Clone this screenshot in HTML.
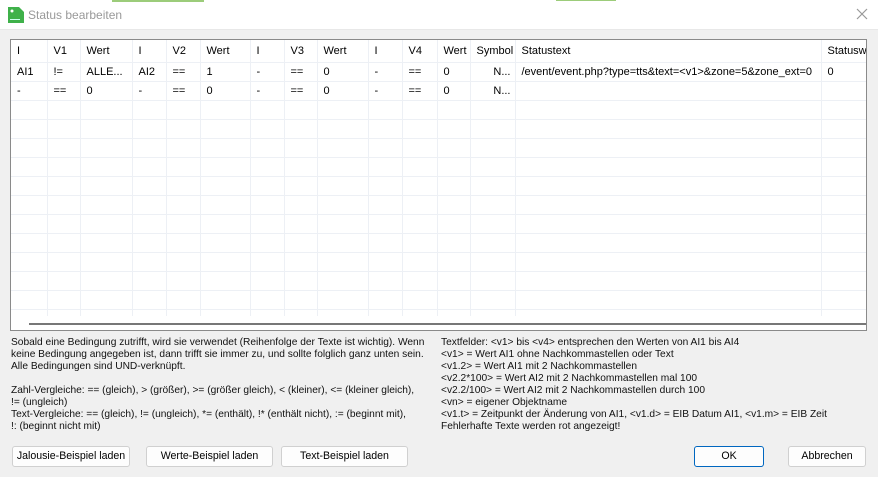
<!DOCTYPE html>
<html><head><meta charset="utf-8"><style>
*{margin:0;padding:0;box-sizing:border-box}
body{width:878px;height:477px;background:#f0f0f0;font-family:"Liberation Sans",sans-serif;font-size:11px;color:#000;position:relative;overflow:hidden}
.title{position:absolute;left:0;top:0;width:878px;height:30px;background:#fff;border-bottom:1px solid #e8e8e8}
.title span{position:absolute;left:28px;top:8px;font-size:12px;color:#999}
.grn{position:absolute;left:112px;top:0;width:92px;height:2px;background:#9ccc7a}
.grn2{position:absolute;left:556px;top:0;width:60px;height:1px;background:#9ccc7a}
.tbox{position:absolute;left:10px;top:39px;width:857px;height:292px;background:#fff;border:1px solid #8a8a8a;overflow:hidden}
table{border-collapse:collapse;table-layout:fixed;position:absolute;left:0;top:0;width:870px}
td{border-right:1px solid #edf0f5;border-bottom:1px solid #edf0f5;height:19px;padding:0 0 0 6px;white-space:nowrap;overflow:hidden;vertical-align:middle}
tr.h td{height:22px}
.r{text-align:right;padding-right:4px}
.sb{position:absolute;left:18px;top:283px;width:840px;height:2px;background:#777}
.sbbg{position:absolute;left:0;top:276px;width:857px;height:16px;background:#fff}
.txt{position:absolute;top:337px;line-height:12px;font-size:10.2px;color:#111;white-space:nowrap}
.btn{position:absolute;top:446px;height:21px;background:#fdfdfd;border:1px solid #d0d0d0;border-radius:3px;text-align:center;line-height:19px;font-size:10.6px}
</style></head><body>
<div class="title"><svg style="position:absolute;left:8px;top:7px" width="16" height="16"><path d="M0 0H11L16 5V16H0Z" fill="#3fb14a"/><circle cx="4" cy="4" r="1.5" fill="#fff"/><rect x="2" y="12" width="10" height="1" fill="#cfe"/></svg><span>Status bearbeiten</span>
<svg style="position:absolute;left:856px;top:8px" width="12" height="12"><path d="M1 1L11 11M11 1L1 11" stroke="#999" stroke-width="1.2"/></svg></div>
<div class="grn"></div><div class="grn2"></div>
<div class="tbox">
<table>
<colgroup><col style="width:36px"><col style="width:33px"><col style="width:52px"><col style="width:34px"><col style="width:34px"><col style="width:50px"><col style="width:34px"><col style="width:33px"><col style="width:51px"><col style="width:34px"><col style="width:35px"><col style="width:33px"><col style="width:45px"><col style="width:306px"><col style="width:60px"></colgroup>
<tr class="h"><td>I</td><td>V1</td><td>Wert</td><td>I</td><td>V2</td><td>Wert</td><td>I</td><td>V3</td><td>Wert</td><td>I</td><td>V4</td><td>Wert</td><td>Symbol</td><td>Statustext</td><td>Statuswert</td></tr>
<tr><td>AI1</td><td>!=</td><td>ALLE...</td><td>AI2</td><td>==</td><td>1</td><td>-</td><td>==</td><td>0</td><td>-</td><td>==</td><td>0</td><td class="r">N...</td><td>/event/event.php?type=tts&amp;text=&lt;v1&gt;&amp;zone=5&amp;zone_ext=0</td><td>0</td></tr>
<tr><td>-</td><td>==</td><td>0</td><td>-</td><td>==</td><td>0</td><td>-</td><td>==</td><td>0</td><td>-</td><td>==</td><td>0</td><td class="r">N...</td><td></td><td></td></tr>
<tr><td></td><td></td><td></td><td></td><td></td><td></td><td></td><td></td><td></td><td></td><td></td><td></td><td></td><td></td><td></td></tr>
<tr><td></td><td></td><td></td><td></td><td></td><td></td><td></td><td></td><td></td><td></td><td></td><td></td><td></td><td></td><td></td></tr>
<tr><td></td><td></td><td></td><td></td><td></td><td></td><td></td><td></td><td></td><td></td><td></td><td></td><td></td><td></td><td></td></tr>
<tr><td></td><td></td><td></td><td></td><td></td><td></td><td></td><td></td><td></td><td></td><td></td><td></td><td></td><td></td><td></td></tr>
<tr><td></td><td></td><td></td><td></td><td></td><td></td><td></td><td></td><td></td><td></td><td></td><td></td><td></td><td></td><td></td></tr>
<tr><td></td><td></td><td></td><td></td><td></td><td></td><td></td><td></td><td></td><td></td><td></td><td></td><td></td><td></td><td></td></tr>
<tr><td></td><td></td><td></td><td></td><td></td><td></td><td></td><td></td><td></td><td></td><td></td><td></td><td></td><td></td><td></td></tr>
<tr><td></td><td></td><td></td><td></td><td></td><td></td><td></td><td></td><td></td><td></td><td></td><td></td><td></td><td></td><td></td></tr>
<tr><td></td><td></td><td></td><td></td><td></td><td></td><td></td><td></td><td></td><td></td><td></td><td></td><td></td><td></td><td></td></tr>
<tr><td></td><td></td><td></td><td></td><td></td><td></td><td></td><td></td><td></td><td></td><td></td><td></td><td></td><td></td><td></td></tr>
<tr><td></td><td></td><td></td><td></td><td></td><td></td><td></td><td></td><td></td><td></td><td></td><td></td><td></td><td></td><td></td></tr>
<tr><td></td><td></td><td></td><td></td><td></td><td></td><td></td><td></td><td></td><td></td><td></td><td></td><td></td><td></td><td></td></tr>
<tr><td></td><td></td><td></td><td></td><td></td><td></td><td></td><td></td><td></td><td></td><td></td><td></td><td></td><td></td><td></td></tr>
</table>
<div class="sbbg"></div><div class="sb"></div>
</div>
<div class="txt" style="left:11px">Sobald eine Bedingung zutrifft, wird sie verwendet (Reihenfolge der Texte ist wichtig). Wenn<br>keine Bedingung angegeben ist, dann trifft sie immer zu, und sollte folglich ganz unten sein.<br>Alle Bedingungen sind UND-verknüpft.<br><br>Zahl-Vergleiche: == (gleich), &gt; (größer), &gt;= (größer gleich), &lt; (kleiner), &lt;= (kleiner gleich),<br>!= (ungleich)<br>Text-Vergleiche: == (gleich), != (ungleich), *= (enthält), !* (enthält nicht), := (beginnt mit),<br>!: (beginnt nicht mit)</div>
<div class="txt" style="left:441px">Textfelder: &lt;v1&gt; bis &lt;v4&gt; entsprechen den Werten von AI1 bis AI4<br>&lt;v1&gt; = Wert AI1 ohne Nachkommastellen oder Text<br>&lt;v1.2&gt; = Wert AI1 mit 2 Nachkommastellen<br>&lt;v2.2*100&gt; = Wert AI2 mit 2 Nachkommastellen mal 100<br>&lt;v2.2/100&gt; = Wert AI2 mit 2 Nachkommastellen durch 100<br>&lt;vn&gt; = eigener Objektname<br>&lt;v1.t&gt; = Zeitpunkt der Änderung von AI1, &lt;v1.d&gt; = EIB Datum AI1, &lt;v1.m&gt; = EIB Zeit<br>Fehlerhafte Texte werden rot angezeigt!</div>
<div class="btn" style="left:12px;width:118px">Jalousie-Beispiel laden</div>
<div class="btn" style="left:146px;width:127px">Werte-Beispiel laden</div>
<div class="btn" style="left:281px;width:127px">Text-Beispiel laden</div>
<div class="btn" style="left:694px;width:70px;border:1px solid #0067c0">OK</div>
<div class="btn" style="left:788px;width:78px">Abbrechen</div>
</body></html>
